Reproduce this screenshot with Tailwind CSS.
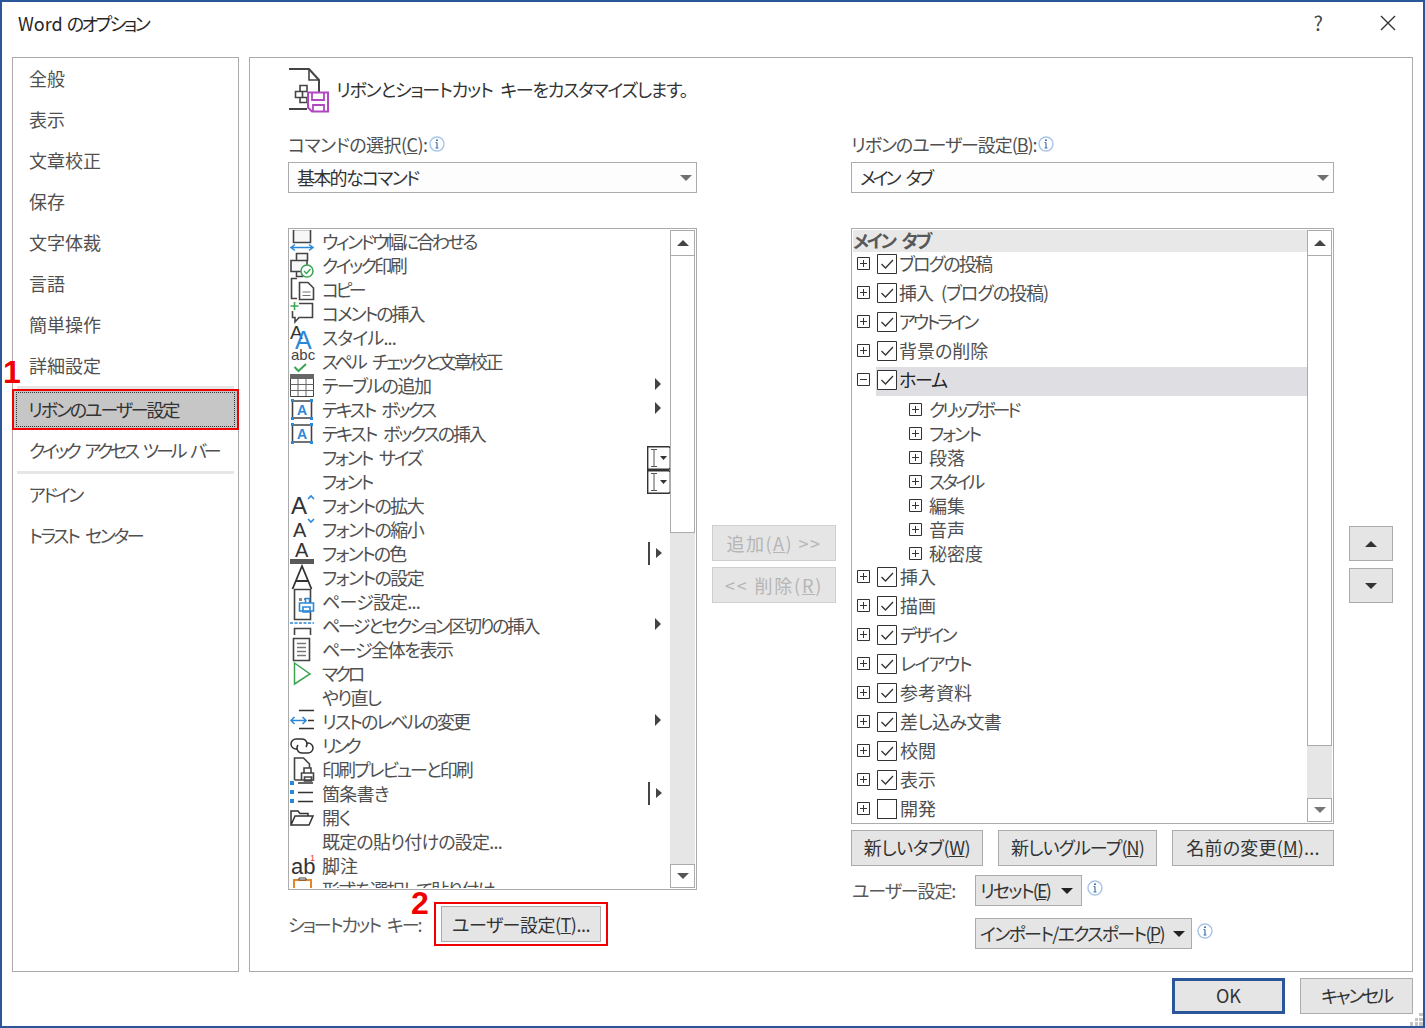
<!DOCTYPE html>
<html lang="ja">
<head>
    <meta charset="UTF-8">
    <title>Word のオプション</title>
    <script src="https://cdn.jsdelivr.net/npm/@tailwindcss/browser@4"></script>
</head>
<body>
    <!-- Shared icons -->
    <svg class="hidden">
        <symbol id="plus" viewBox="0 0 13 13"><path d="M.5.5h12v12H.5zM3 6.500h7M6.500 3v7" fill="#fff" stroke="#333"/></symbol>
        <symbol id="minus" viewBox="0 0 13 13"><path d="M.5.5h12v12H.5zM3 6.500h7" fill="#fff" stroke="#333"/></symbol>
        <symbol id="check" viewBox="0 0 20 20"><path d="M.5.5h19v19H.5z" fill="#fff" stroke="#333"/><path d="M4.500 10l4 4 7.500-8" fill="none" stroke="#333" stroke-width="1.300"/></symbol>
        <symbol id="info" viewBox="0 0 16 16"><circle cx="8" cy="8" r="7" fill="#fff" stroke="#a9c4e6" stroke-width="1.400"/><path d="M8 6.500V12M6.500 12h3M6.500 6.500H8" fill="none" stroke="#4273ab" stroke-width="1.200"/><path d="M7 3.500h2v1.500H7z" fill="#4273ab"/></symbol>
        <symbol id="submenu" viewBox="0 0 8 12"><path d="M1 0l6 6-6 6z" fill="#444"/></symbol>
        <symbol id="barmenu" viewBox="0 0 14 23"><path d="M1 0v23" stroke="#444" stroke-width="2"/><path d="M8 6l6 5-6 5z" fill="#444"/></symbol>
        <symbol id="ibeam" viewBox="0 0 24 24"><path d="M.7 23.300V.7H22l1.300 1.300v20l-1.300 1.300z" fill="#fff" stroke="#333" stroke-width="1.400"/><path d="M4 3.500h6M4 20.500h6M7 3.500v17" fill="none" stroke="#555"/><path d="M13 10h7l-3.500 4z" fill="#333"/></symbol>
        <symbol id="tbox" viewBox="0 0 24 24"><path d="M2.500 3h19v17h-19z" fill="#fff" stroke="#444" stroke-width="1.600"/><path d="M1 1h3v3H1zM20 1h3v3h-3zM1 19h3v3H1zM20 19h3v3h-3z" fill="#2b88d8"/><text x="12" y="17" text-anchor="middle" font-size="14" font-weight="700" fill="#2b88d8" font-family="Liberation Sans">A</text></symbol>
    </svg>

    <div class="relative w-[1425px] h-[1028px] overflow-hidden whitespace-nowrap border-2 border-[#2b579a] bg-white text-[18px] text-[#505050] [font-feature-settings:'palt'] font-['Noto_Sans_CJK_JP','Noto_Sans',sans-serif]">
        <!-- Title bar -->
        <div class="flex h-[55px] items-center justify-between pl-[16px] pr-[27px] pb-[13px]">
            <div class="text-[18px] text-[#262626]">Word <span class="tracking-[-2.500px]">のオプション</span></div>
            <div class="flex items-center gap-[57px]">
                <span class="text-[20px] text-[#444]">?</span>
                <svg width="16" height="16" viewBox="0 0 16 16"><path d="M1 1l14 14M15 1L1 15" stroke="#333" stroke-width="1.400"/></svg>
            </div>
        </div>

        <div class="flex h-[915px] gap-[10px] px-[10px]">
            <!-- Sidebar -->
            <div class="w-[227px] shrink-0 border border-[#ababab]">
                <div class="flex h-[41px] items-center px-[16px]">全般</div>
                <div class="flex h-[41px] items-center px-[16px]">表示</div>
                <div class="flex h-[41px] items-center px-[16px]">文章校正</div>
                <div class="flex h-[41px] items-center px-[16px]">保存</div>
                <div class="flex h-[41px] items-center px-[16px]">文字体裁</div>
                <div class="flex h-[41px] items-center px-[16px]">言語</div>
                <div class="flex h-[41px] items-center px-[16px]">簡単操作</div>
                <div class="flex h-[41px] items-center px-[16px]">詳細設定</div>
                <div class="mx-[4px] h-[3px] bg-[#e6e6e6]"></div>
                <div class="relative flex h-[41px] items-center bg-[#c6c6c6] px-[15px] text-[#333] tracking-[-2.100px]">
                    <div class="absolute inset-[3px] border border-dotted border-[#333]"></div>
                    リボンのユーザー設定
                    <div class="absolute -inset-x-[1px] inset-y-0 border-2 border-[#f00000]"></div>
                </div>
                <div class="flex h-[41px] items-center px-[16px] tracking-[-3.200px] [word-spacing:5px]">クイック アクセス ツール バー</div>
                <div class="mx-[4px] h-[3px] bg-[#e6e6e6]"></div>
                <div class="flex h-[41px] items-center px-[16px] tracking-[-2.500px]">アドイン</div>
                <div class="flex h-[41px] items-center px-[16px] tracking-[-2.400px] [word-spacing:5px]">トラスト センター</div>
            </div>

            <!-- Main panel -->
            <div class="w-[1164px] shrink-0 border border-[#ababab] pl-[38px] pt-[10px]">
                <div class="flex h-[45px] items-center gap-[6px]">
                    <svg width="42" height="45" viewBox="0 0 42 45" class="shrink-0">
                        <path d="M1 1h20l10 11v20M19 41H1z" fill="#fff" stroke="#444" stroke-width="2"/>
                        <path d="M21 1v11h10" fill="none" stroke="#444" stroke-width="1.600"/>
                        <path d="M12 17.500h7v6h-7zM7.500 23.500h7v6h-7zM12 29.500h7v5h-7z" fill="#fff" stroke="#444" stroke-width="1.600"/>
                        <path d="M20 24.500h20v19H24l-4-4z" fill="#fff" stroke="#b146c2" stroke-width="2"/>
                        <path d="M24 25v7h12v-7M25 44v-7h11v7" fill="none" stroke="#b146c2" stroke-width="1.800"/>
                    </svg>
                    <div class="pb-[2px] text-[#333] tracking-[-1.250px] [word-spacing:5px]">リボンとショートカット キーをカスタマイズします。</div>
                </div>

                <div class="mt-[20px] flex gap-[15px]">
                    <!-- Left column -->
                    <div class="w-[409px] shrink-0">
                        <div class="flex h-[24px] items-center gap-[2px] [&_span]:-translate-y-px">
                            <span class="tracking-[-0.550px]">コマンドの選択(<span class="underline">C</span>):</span>
                            <svg width="16" height="16" class="-mt-[2px]"><use href="#info"/></svg>
                        </div>
                        <div class="mt-[5px] flex h-[31px] items-center justify-between border border-[#ababab] bg-[#fdfdfd] pl-[8px] pr-[4px] text-[#333]">
                            <span class="tracking-[-1.700px]">基本的なコマンド</span>
                            <svg width="12" height="6"><path d="M0 0h12L6 6z" fill="#707070"/></svg>
                        </div>

                        <div class="mt-[35px] flex h-[662px] border border-[#ababab] p-[1px]">
                            <div class="flex-1 overflow-hidden [&_span]:-translate-y-px">
                                <div class="flex h-6 items-center gap-[8px]">
                                    <svg width="24" height="24" class="overflow-visible shrink-0"><path d="M3.500-.5h17v13h-17z" fill="#f7f7f7" stroke="#444" stroke-width="1.600"/><path d="M1 17.500h22M5 14.500l-4 3 4 3M19 14.500l4 3-4 3" fill="none" stroke="#2b88d8" stroke-width="1.500"/></svg>
                                    <span class="tracking-[-2.500px]">ウィンドウ幅に合わせる</span>
                                </div>
                                <div class="flex h-6 items-center gap-[8px]">
                                    <svg width="24" height="24" class="overflow-visible shrink-0"><path d="M6.500-.5h11v7h-11zM1 6.500h16v11H1zM6.500 17.500h6v5h-6z" fill="#f7f7f7" stroke="#444" stroke-width="1.600"/><circle cx="17" cy="17" r="6" fill="#fff" stroke="#3aa655" stroke-width="1.500"/><path d="M14 17l2.500 2.500 4-4.500" fill="none" stroke="#3aa655" stroke-width="1.500"/></svg>
                                    <span class="tracking-[-2.500px]">クイック印刷</span>
                                </div>
                                <div class="flex h-6 items-center gap-[8px]">
                                    <svg width="24" height="24" class="overflow-visible shrink-0"><path d="M7 .5H1.500v20H7" fill="none" stroke="#444" stroke-width="1.600"/><path d="M9.500 4.500H18l5.500 5.500v11.500h-14z" fill="#fff" stroke="#444" stroke-width="1.600"/><path d="M12.500 14h8M12.500 17.500h8" stroke="#777"/></svg>
                                    <span class="tracking-[-3.500px]">コピー</span>
                                </div>
                                <div class="flex h-6 items-center gap-[8px]">
                                    <svg width="24" height="24" class="overflow-visible shrink-0"><path d="M9 1.500h13.500v14H9l-4 4.500v-4.500H2.500V9" fill="#fff" stroke="#444" stroke-width="1.600"/><path d="M4.500 0v8M.5 4h8" stroke="#3aa655" stroke-width="1.600"/></svg>
                                    <span class="tracking-[-2.100px]">コメントの挿入</span>
                                </div>
                                <div class="flex h-6 items-center gap-[8px]">
                                    <svg width="24" height="24" class="overflow-visible shrink-0" font-family="Liberation Sans"><text x="0" y="13" font-size="19" fill="#333">A</text><text x="5" y="23" font-size="25" fill="#2b88d8">A</text></svg>
                                    <span class="tracking-[-0.800px]">スタイル...</span>
                                </div>
                                <div class="flex h-6 items-center gap-[8px]">
                                    <svg width="24" height="24" class="overflow-visible shrink-0" font-family="Liberation Sans"><text x="1" y="10" font-size="15" fill="#444">abc</text><path d="M4.500 17l4 4 7.500-7" fill="none" stroke="#3aa655" stroke-width="2"/></svg>
                                    <span class="tracking-[-2.250px] [word-spacing:5px]">スペル チェックと文章校正</span>
                                </div>
                                <div class="relative flex h-6 items-center gap-[8px]">
                                    <svg width="24" height="24" class="overflow-visible shrink-0"><path d="M.5.5h23v22H.5z" fill="#fff" stroke="#444"/><path d="M0 0h24v5H0z" fill="#666"/><path d="M.5 10.500h23M.5 16.500h23M8 5v17M16 5v17" stroke="#666"/></svg>
                                    <span class="tracking-[-1.500px]">テーブルの追加</span>
                                    <svg width="8" height="12" class="absolute left-[364px] top-[4px]"><use href="#submenu"/></svg>
                                </div>
                                <div class="relative flex h-6 items-center gap-[8px]">
                                    <svg width="24" height="24" class="shrink-0"><use href="#tbox"/></svg>
                                    <span class="tracking-[-2.500px] [word-spacing:5px]">テキスト ボックス</span>
                                    <svg width="8" height="12" class="absolute left-[364px] top-[4px]"><use href="#submenu"/></svg>
                                </div>
                                <div class="relative flex h-6 items-center gap-[8px]">
                                    <svg width="24" height="24" class="shrink-0"><use href="#tbox"/></svg>
                                    <span class="tracking-[-2.150px] [word-spacing:5px]">テキスト ボックスの挿入</span>
                                </div>
                                <div class="relative flex h-6 items-center gap-[8px]">
                                    <div class="w-[24px] shrink-0"></div>
                                    <span class="tracking-[-2.200px] [word-spacing:5px]">フォント サイズ</span>
                                    <svg width="24" height="24" class="absolute left-[357px] top-0"><use href="#ibeam"/></svg>
                                </div>
                                <div class="relative flex h-6 items-center gap-[8px]">
                                    <div class="w-[24px] shrink-0"></div>
                                    <span class="tracking-[-2.250px]">フォント</span>
                                    <svg width="24" height="24" class="absolute left-[357px] top-0"><use href="#ibeam"/></svg>
                                </div>
                                <div class="flex h-6 items-center gap-[8px]">
                                    <svg width="24" height="24" class="overflow-visible shrink-0" font-family="Liberation Sans"><text x="1" y="20" font-size="24" fill="#333">A</text><path d="M18 5l3-3 3 3" fill="none" stroke="#2b88d8" stroke-width="1.600"/></svg>
                                    <span class="tracking-[-1.600px]">フォントの拡大</span>
                                </div>
                                <div class="flex h-6 items-center gap-[8px]">
                                    <svg width="24" height="24" class="overflow-visible shrink-0" font-family="Liberation Sans"><text x="3" y="19" font-size="20" fill="#333">A</text><path d="M18 1l3 3 3-3" fill="none" stroke="#2b88d8" stroke-width="1.600"/></svg>
                                    <span class="tracking-[-1.600px]">フォントの縮小</span>
                                </div>
                                <div class="relative flex h-6 items-center gap-[8px]">
                                    <svg width="24" height="24" class="overflow-visible shrink-0" font-family="Liberation Sans"><text x="5" y="15" font-size="20" fill="#333">A</text><path d="M0 17h24v5H0z" fill="#595959"/></svg>
                                    <span class="tracking-[-1.800px]">フォントの色</span>
                                    <svg width="14" height="23" class="absolute left-[358px] top-0"><use href="#barmenu"/></svg>
                                </div>
                                <div class="flex h-6 items-center gap-[8px]">
                                    <svg width="24" height="24" class="overflow-visible shrink-0"><path d="M2.500 23L12 0l9.500 23M6 15h12" fill="none" stroke="#333" stroke-width="1.800"/></svg>
                                    <span class="tracking-[-1.600px]">フォントの設定</span>
                                </div>
                                <div class="flex h-6 items-center gap-[8px]">
                                    <svg width="24" height="24" class="overflow-visible shrink-0"><path d="M4.500-.5h16v30h-16z" fill="#fff" stroke="#444" stroke-width="1.600"/><path d="M9 8h3v3H9zM14 8h2v2h-2z" fill="#888"/><path d="M12.500 13h7v-4.500h-4V13h-3zM9.500 13h14v8h-14zM13 17h7v5h-7z" fill="#fff" stroke="#2b88d8" stroke-width="1.600"/></svg>
                                    <span class="tracking-[-0.800px]">ページ設定...</span>
                                </div>
                                <div class="relative flex h-6 items-center gap-[8px]">
                                    <svg width="24" height="24" class="overflow-visible shrink-0"><path d="M0 9h24" stroke="#2b88d8" stroke-dasharray="3 1.500" stroke-width="1.400"/><path d="M4.500 21v-6.500h16V21" fill="#fff" stroke="#444" stroke-width="1.600"/></svg>
                                    <span class="tracking-[-2.450px]">ページとセクション区切りの挿入</span>
                                    <svg width="8" height="12" class="absolute left-[364px] top-[4px]"><use href="#submenu"/></svg>
                                </div>
                                <div class="flex h-6 items-center gap-[8px]">
                                    <svg width="24" height="24" class="overflow-visible shrink-0"><path d="M3.500.5h16v22h-16z" fill="#fff" stroke="#444" stroke-width="1.600"/><path d="M7 5.500h9M7 9.500h9M7 13.500h9M7 17.500h9" stroke="#777" stroke-width="1.300"/></svg>
                                    <span class="tracking-[-1.400px]">ページ全体を表示</span>
                                </div>
                                <div class="flex h-6 items-center gap-[8px]">
                                    <svg width="24" height="24" class="overflow-visible shrink-0"><path d="M4.500 1L20 12 4.500 22z" fill="#fff" stroke="#3aa655" stroke-width="1.500"/></svg>
                                    <span class="tracking-[-3.300px]">マクロ</span>
                                </div>
                                <div class="flex h-6 items-center gap-[8px]">
                                    <div class="w-[24px] shrink-0"></div>
                                    <span class="tracking-[-1.750px]">やり直し</span>
                                </div>
                                <div class="relative flex h-6 items-center gap-[8px]">
                                    <svg width="24" height="24" class="overflow-visible shrink-0"><path d="M9 .5h15M18 10.500h6M9 18.500h15" stroke="#333" stroke-width="1.300"/><path d="M1 10.500h15M4.500 7l-3.500 3.500L4.500 14M12.500 7l3.500 3.500-3.500 3.500" fill="none" stroke="#2b88d8" stroke-width="1.500"/></svg>
                                    <span class="tracking-[-1.950px]">リストのレベルの変更</span>
                                    <svg width="8" height="12" class="absolute left-[364px] top-[4px]"><use href="#submenu"/></svg>
                                </div>
                                <div class="flex h-6 items-center gap-[8px]">
                                    <svg width="24" height="24" class="overflow-visible shrink-0" fill="none" stroke="#333" stroke-width="1.500"><path d="M8 15H6a5 5 0 010-10h6a5 5 0 014 8"/><path d="M16 9h2a5 5 0 010 10h-6a5 5 0 01-4-8"/></svg>
                                    <span class="tracking-[-3.600px]">リンク</span>
                                </div>
                                <div class="flex h-6 items-center gap-[8px]">
                                    <svg width="24" height="24" class="overflow-visible shrink-0"><path d="M4.500 22V0h9l6 6v6M4.500 22H11" fill="#fff" stroke="#444" stroke-width="1.600"/><path d="M14 10h7v5h-7zM11.500 15h12v7h-12zM14.500 19h7v4h-7z" fill="#fff" stroke="#444" stroke-width="1.600"/></svg>
                                    <span class="tracking-[-2px]">印刷プレビューと印刷</span>
                                </div>
                                <div class="relative flex h-6 items-center gap-[8px]">
                                    <svg width="24" height="24" class="overflow-visible shrink-0"><path d="M0-1h4v4H0zM0 8h4v4H0zM0 17h4v4H0z" fill="#2b88d8"/><path d="M8 1h15M8 10.500h15M8 19.500h15" stroke="#333" stroke-width="1.300"/></svg>
                                    <span class="tracking-[-0.750px]">箇条書き</span>
                                    <svg width="14" height="23" class="absolute left-[358px] top-0"><use href="#barmenu"/></svg>
                                </div>
                                <div class="flex h-6 items-center gap-[8px]">
                                    <svg width="24" height="24" class="overflow-visible shrink-0"><path d="M1 19V5h7l2 2.500h8V10M1 19l4-9h18l-4 9z" fill="#fff" stroke="#333" stroke-width="1.500"/></svg>
                                    <span class="tracking-[-1px]">開く</span>
                                </div>
                                <div class="flex h-6 items-center gap-[8px]">
                                    <div class="w-[24px] shrink-0"></div>
                                    <span class="tracking-[-0.800px]">既定の貼り付けの設定...</span>
                                </div>
                                <div class="flex h-6 items-center gap-[8px]">
                                    <svg width="24" height="24" class="overflow-visible shrink-0" font-family="Liberation Sans"><text x="1" y="20" font-size="22" fill="#333">ab</text><text x="20" y="7" font-size="9" fill="#e04040">1</text></svg>
                                    <span>脚注</span>
                                </div>
                                <div class="flex h-6 items-center gap-[8px]">
                                    <svg width="24" height="24" class="overflow-visible shrink-0"><path d="M4 2h17v22H4z" fill="#fff" stroke="#e8842a" stroke-width="2"/><path d="M9 2h7V0H9z" fill="#fff" stroke="#444"/></svg>
                                    <span class="tracking-[-1.500px]">形式を選択して貼り付け</span>
                                </div>
                            </div>
                            <!-- Scrollbar -->
                            <div class="flex w-[25px] shrink-0 flex-col bg-[#e6e6e6]">
                                <div class="flex h-[26px] items-center justify-center border border-[#ababab] bg-white">
                                    <svg width="12" height="6"><path d="M6 0l6 6H0z" fill="#444"/></svg>
                                </div>
                                <div class="-mt-[1px] h-[278px] border border-[#ababab] bg-white"></div>
                                <div class="flex-1"></div>
                                <div class="flex h-[24px] items-center justify-center border border-[#ababab] bg-white">
                                    <svg width="12" height="6"><path d="M0 0h12L6 6z" fill="#555"/></svg>
                                </div>
                            </div>
                        </div>

                        <div class="relative mt-[12px] flex h-[44px] items-center">
                            <span class="w-[153px] shrink-0 text-[#595959] tracking-[-2.050px] [word-spacing:5px]">ショートカット キー:</span>
                            <div class="flex h-[36px] w-[160px] items-center justify-center border border-[#ababab] bg-[#e5e5e5] text-[#333]"><span class="tracking-[-0.500px]">ユーザー設定(<span class="underline">T</span>)...</span></div>
                            <div class="absolute left-[146px] top-0 h-[44px] w-[174px] border-2 border-[#f00000]"></div>
                        </div>
                    </div>

                    <!-- Add / remove -->
                    <div class="mt-[392px] flex w-[124px] shrink-0 flex-col gap-[6px] text-[#b5b5b5]">
                        <div class="flex h-[36px] items-center justify-center border border-[#cfcfcf] bg-[#e5e5e5]"><span class="tracking-[1.500px]">追加(<span class="underline">A</span>) &gt;&gt;</span></div>
                        <div class="flex h-[36px] items-center justify-center border border-[#cfcfcf] bg-[#e5e5e5]"><span class="tracking-[1.800px]">&lt;&lt; 削除(<span class="underline">R</span>)</span></div>
                    </div>

                    <!-- Right column -->
                    <div class="w-[483px] shrink-0">
                        <div class="flex h-[24px] items-center gap-[2px] [&_span]:-translate-y-px">
                            <span class="tracking-[-1.070px]">リボンのユーザー設定(<span class="underline">B</span>):</span>
                            <svg width="16" height="16" class="-mt-[2px]"><use href="#info"/></svg>
                        </div>
                        <div class="mt-[5px] flex h-[31px] items-center justify-between border border-[#ababab] bg-[#fdfdfd] pl-[8px] pr-[4px] text-[#333]">
                            <span class="tracking-[-3px] [word-spacing:6px]">メイン タブ</span>
                            <svg width="12" height="6"><path d="M0 0h12L6 6z" fill="#707070"/></svg>
                        </div>

                        <div class="mt-[35px] flex h-[596px] border border-[#ababab] p-[1px]">
                            <div class="flex-1 overflow-hidden">
                                <div class="flex h-[22px] items-center bg-[#e8e8e8] pb-[2px] font-bold text-[#595959] tracking-[-2.300px] [word-spacing:5px]">メイン タブ</div>
                                <div class="-mt-[3px] flex h-[29px] items-center pl-[4px]"><svg width="13" height="13" class="shrink-0"><use href="#plus"/></svg><svg width="20" height="20" class="ml-[7px] shrink-0"><use href="#check"/></svg><span class="ml-[2px] tracking-[-1.800px]">ブログの投稿</span></div>
                                <div class="flex h-[29px] items-center pl-[4px]"><svg width="13" height="13" class="shrink-0"><use href="#plus"/></svg><svg width="20" height="20" class="ml-[7px] shrink-0"><use href="#check"/></svg><span class="ml-[2px] tracking-[-1px] [word-spacing:5px]">挿入 (ブログの投稿)</span></div>
                                <div class="flex h-[29px] items-center pl-[4px]"><svg width="13" height="13" class="shrink-0"><use href="#plus"/></svg><svg width="20" height="20" class="ml-[7px] shrink-0"><use href="#check"/></svg><span class="ml-[2px] tracking-[-2.800px]">アウトライン</span></div>
                                <div class="flex h-[29px] items-center pl-[4px]"><svg width="13" height="13" class="shrink-0"><use href="#plus"/></svg><svg width="20" height="20" class="ml-[7px] shrink-0"><use href="#check"/></svg><span class="ml-[2px]">背景の削除</span></div>
                                <div class="flex h-[29px] items-center pl-[4px]">
                                    <svg width="13" height="13" class="shrink-0"><use href="#minus"/></svg>
                                    <div class="ml-[6px] mt-[4px] flex h-[29px] flex-1 items-center bg-[#dfdfe3] pb-[4px] pl-[1px] text-[#222]">
                                        <svg width="20" height="20" class="shrink-0"><use href="#check"/></svg><span class="ml-[2px] tracking-[-1.200px]">ホーム</span>
                                    </div>
                                </div>
                                <div class="mt-[3px] flex h-6 items-center pl-[56px]"><svg width="13" height="13" class="shrink-0"><use href="#plus"/></svg><span class="ml-[7px] tracking-[-3.100px]">クリップボード</span></div>
                                <div class="flex h-6 items-center pl-[56px]"><svg width="13" height="13" class="shrink-0"><use href="#plus"/></svg><span class="ml-[7px] tracking-[-2px]">フォント</span></div>
                                <div class="flex h-6 items-center pl-[56px]"><svg width="13" height="13" class="shrink-0"><use href="#plus"/></svg><span class="ml-[7px]">段落</span></div>
                                <div class="flex h-6 items-center pl-[56px]"><svg width="13" height="13" class="shrink-0"><use href="#plus"/></svg><span class="ml-[7px] tracking-[-2.800px]">スタイル</span></div>
                                <div class="flex h-6 items-center pl-[56px]"><svg width="13" height="13" class="shrink-0"><use href="#plus"/></svg><span class="ml-[7px]">編集</span></div>
                                <div class="flex h-6 items-center pl-[56px]"><svg width="13" height="13" class="shrink-0"><use href="#plus"/></svg><span class="ml-[7px]">音声</span></div>
                                <div class="flex h-6 items-center pl-[56px]"><svg width="13" height="13" class="shrink-0"><use href="#plus"/></svg><span class="ml-[7px]">秘密度</span></div>
                                <div class="-mt-[3px] flex h-[29px] items-center pl-[4px]"><svg width="13" height="13" class="shrink-0"><use href="#plus"/></svg><svg width="20" height="20" class="ml-[7px] shrink-0"><use href="#check"/></svg><span class="ml-[3px]">挿入</span></div>
                                <div class="flex h-[29px] items-center pl-[4px]"><svg width="13" height="13" class="shrink-0"><use href="#plus"/></svg><svg width="20" height="20" class="ml-[7px] shrink-0"><use href="#check"/></svg><span class="ml-[3px]">描画</span></div>
                                <div class="flex h-[29px] items-center pl-[4px]"><svg width="13" height="13" class="shrink-0"><use href="#plus"/></svg><svg width="20" height="20" class="ml-[7px] shrink-0"><use href="#check"/></svg><span class="ml-[3px] tracking-[-2.800px]">デザイン</span></div>
                                <div class="flex h-[29px] items-center pl-[4px]"><svg width="13" height="13" class="shrink-0"><use href="#plus"/></svg><svg width="20" height="20" class="ml-[7px] shrink-0"><use href="#check"/></svg><span class="ml-[3px] tracking-[-1.500px]">レイアウト</span></div>
                                <div class="flex h-[29px] items-center pl-[4px]"><svg width="13" height="13" class="shrink-0"><use href="#plus"/></svg><svg width="20" height="20" class="ml-[7px] shrink-0"><use href="#check"/></svg><span class="ml-[3px]">参考資料</span></div>
                                <div class="flex h-[29px] items-center pl-[4px]"><svg width="13" height="13" class="shrink-0"><use href="#plus"/></svg><svg width="20" height="20" class="ml-[7px] shrink-0"><use href="#check"/></svg><span class="ml-[3px] tracking-[-0.600px]">差し込み文書</span></div>
                                <div class="flex h-[29px] items-center pl-[4px]"><svg width="13" height="13" class="shrink-0"><use href="#plus"/></svg><svg width="20" height="20" class="ml-[7px] shrink-0"><use href="#check"/></svg><span class="ml-[3px]">校閲</span></div>
                                <div class="flex h-[29px] items-center pl-[4px]"><svg width="13" height="13" class="shrink-0"><use href="#plus"/></svg><svg width="20" height="20" class="ml-[7px] shrink-0"><use href="#check"/></svg><span class="ml-[3px]">表示</span></div>
                                <div class="flex h-[29px] items-center pl-[4px]"><svg width="13" height="13" class="shrink-0"><use href="#plus"/></svg><div class="ml-[7px] h-[20px] w-[20px] shrink-0 border border-[#333]"></div><span class="ml-[3px]">開発</span></div>
                            </div>
                            <!-- Scrollbar -->
                            <div class="flex w-[25px] shrink-0 flex-col bg-[#e6e6e6]">
                                <div class="flex h-[26px] items-center justify-center border border-[#ababab] bg-white">
                                    <svg width="12" height="6"><path d="M6 0l6 6H0z" fill="#444"/></svg>
                                </div>
                                <div class="-mt-[1px] h-[491px] border border-[#ababab] bg-white"></div>
                                <div class="flex-1"></div>
                                <div class="flex h-[24px] items-center justify-center border border-[#ababab] bg-white">
                                    <svg width="12" height="6"><path d="M0 0h12L6 6z" fill="#777"/></svg>
                                </div>
                            </div>
                        </div>

                        <div class="mt-[6px] flex justify-between text-[#333] [&_span]:-translate-y-px">
                            <div class="flex h-[36px] w-[132px] items-center justify-center border border-[#ababab] bg-[#e5e5e5]"><span class="tracking-[-0.400px]">新しいタブ(<span class="underline">W</span>)</span></div>
                            <div class="flex h-[36px] w-[159px] items-center justify-center border border-[#ababab] bg-[#e5e5e5]"><span class="tracking-[-0.900px]">新しいグループ(<span class="underline">N</span>)</span></div>
                            <div class="flex h-[36px] w-[162px] items-center justify-center border border-[#ababab] bg-[#e5e5e5]"><span class="tracking-[0.200px]">名前の変更(<span class="underline">M</span>)...</span></div>
                        </div>
                        <div class="mt-[9px] flex h-[31px] items-center">
                            <span class="w-[124px] shrink-0 pl-[1px] text-[#595959] tracking-[-1.100px]">ユーザー設定:</span>
                            <div class="flex h-[31px] w-[107px] items-center justify-between border border-[#ababab] bg-[#e5e5e5] pl-[4px] pr-[8px] text-[#333]"><span class="tracking-[-1.800px]">リセット(<span class="underline">E</span>)</span><svg width="12" height="6"><path d="M0 0h12L6 6z" fill="#222"/></svg></div>
                            <svg width="16" height="16" class="ml-[5px] -mt-[5px]"><use href="#info"/></svg>
                        </div>
                        <div class="mt-[12px] flex h-[31px] items-center pl-[124px]">
                            <div class="flex h-[31px] w-[217px] items-center justify-between border border-[#ababab] bg-[#e5e5e5] pl-[4px] pr-[6px] text-[#333]"><span class="tracking-[-1.700px]">インポート/エクスポート(<span class="underline">P</span>)</span><svg width="12" height="6"><path d="M0 0h12L6 6z" fill="#222"/></svg></div>
                            <svg width="16" height="16" class="ml-[5px] -mt-[5px]"><use href="#info"/></svg>
                        </div>
                    </div>

                    <!-- Move up / down -->
                    <div class="mt-[393px] flex w-[44px] shrink-0 flex-col gap-[7px]">
                        <div class="flex h-[35px] items-center justify-center border border-[#ababab] bg-[#e5e5e5]"><svg width="12" height="6"><path d="M6 0l6 6H0z" fill="#333"/></svg></div>
                        <div class="flex h-[35px] items-center justify-center border border-[#ababab] bg-[#e5e5e5]"><svg width="12" height="6"><path d="M0 0h12L6 6z" fill="#333"/></svg></div>
                    </div>
                </div>
            </div>
        </div>

        <!-- Footer -->
        <div class="flex justify-end gap-[15px] pr-[10px] pt-[6px] text-[#333]">
            <div class="flex h-[36px] w-[113px] items-center justify-center border-[3px] border-[#2b579a] bg-[#e5e5e5] pb-[2px]">OK</div>
            <div class="flex h-[36px] w-[113px] items-center justify-center border border-[#ababab] bg-[#e5e5e5] pb-[2px] tracking-[-2.200px]">キャンセル</div>
        </div>
        <svg width="13" height="13" class="absolute bottom-0 right-0"><path d="M9 0h4v3H9zM5 5h3v3H5zM9 5h4v3H9zM0 9h3v4H0zM5 9h3v4H5zM9 9h4v4H9z" fill="#c4c4c4"/></svg>

        <!-- Step numbers -->
        <div class="absolute left-[1px] top-[352px] text-[32px] font-bold leading-[36px] text-[#f00000] font-['Liberation_Sans',sans-serif]">1</div>
        <div class="absolute left-[409px] top-[883px] text-[32px] font-bold leading-[36px] text-[#f00000] font-['Liberation_Sans',sans-serif]">2</div>
    </div>
</body>
</html>
